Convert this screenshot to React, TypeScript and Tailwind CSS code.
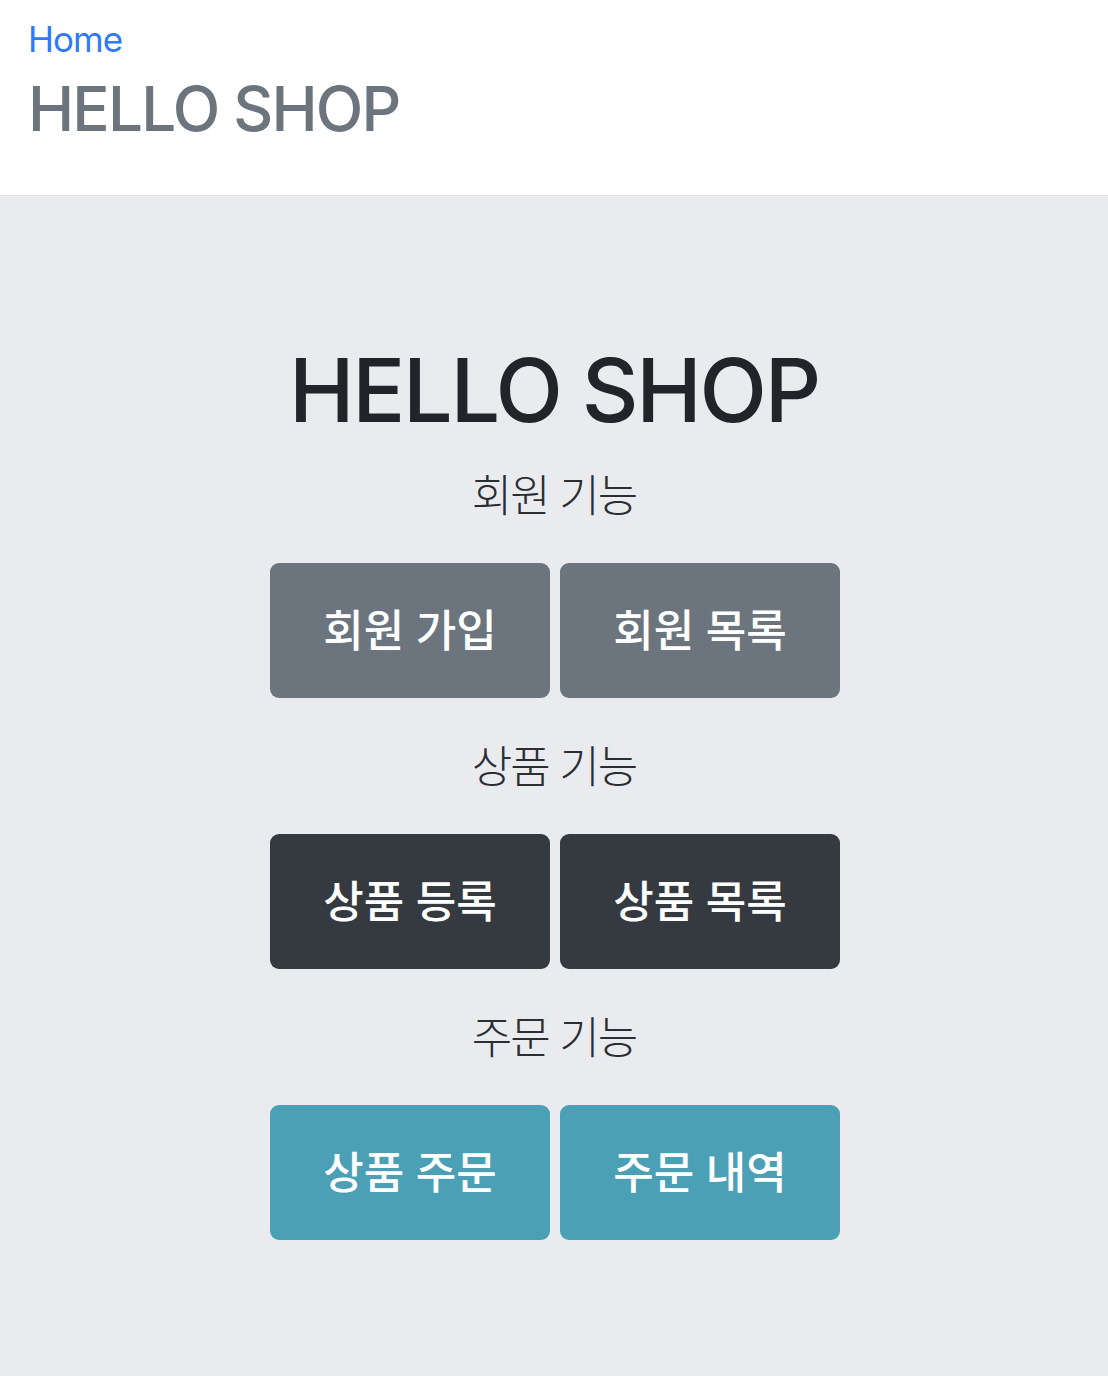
import React from "react";

const KO = { fontFamily: 'Inter, "Noto Sans CJK KR", sans-serif' };

function Btn({ label, color }: { label: string; color: string }) {
  return (
    <a
      href="#"
      className={`flex h-[135px] w-[280px] items-center justify-center rounded-[9px] text-[44px] font-medium text-white ${color}`}
      style={KO}
    >
      {label}
    </a>
  );
}

function Section({
  title,
  a,
  b,
  color,
}: {
  title: string;
  a: string;
  b: string;
  color: string;
}) {
  return (
    <>
      <p
        className="mt-[36px] text-[44px] font-light leading-[66px] tracking-[-2px] text-[#2a2e33]"
        style={KO}
      >
        {title}
      </p>
      <div className="mt-[34px] flex gap-[10px] pl-[2px]">
        <Btn label={a} color={color} />
        <Btn label={b} color={color} />
      </div>
    </>
  );
}

export default function App() {
  return (
    <div
      className="min-h-[1376px] w-full bg-[#e9ebef]"
      style={{ fontFamily: 'Inter, "Noto Sans CJK KR", sans-serif' }}
    >
      <header className="h-[196px] border-b border-[#e3e3e3] bg-white px-[28px] pt-[18px]">
        <a
          href="#"
          className="block text-[35px] leading-[42px] tracking-[-1px] text-[#2f7bf6]"
        >
          Home
        </a>
        <h3 className="mt-[12px] text-[62px] font-medium leading-[74px] tracking-[-1.8px] text-[#6c757d]">
          HELLO SHOP
        </h3>
      </header>
      <main className="flex flex-col items-center pt-[141px]">
        <h1 className="mb-0 text-[88px] font-medium leading-[106px] tracking-[-2.3px] text-[#212529]">
          HELLO SHOP
        </h1>
        <div className="-mt-[16px]" />
        <Section title="회원 기능" a="회원 가입" b="회원 목록" color="bg-[#6c757d]" />
        <Section title="상품 기능" a="상품 등록" b="상품 목록" color="bg-[#343a40]" />
        <Section title="주문 기능" a="상품 주문" b="주문 내역" color="bg-[#4ba0b6]" />
      </main>
    </div>
  );
}
